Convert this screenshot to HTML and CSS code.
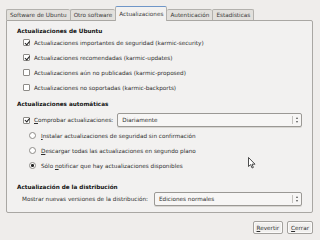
FILE: index.html
```html
<!DOCTYPE html>
<html lang="es">
<head>
  <meta charset="UTF-8" />
  <title>Orígenes del software</title>
  <link rel="stylesheet" href="styles.css">
</head>
<body>
  <div class="window">
    <div class="tabs">
      <div class="tab">Software de Ubuntu</div>
      <div class="tab">Otro software</div>
      <div class="tab active">Actualizaciones</div>
      <div class="tab">Autenticación</div>
      <div class="tab">Estadísticas</div>
    </div>

    <div class="panel">
      <h3>Actualizaciones de Ubuntu</h3>
      <div class="row check-row"><span class="check on"></span><span>Actualizaciones importantes de seguridad (karmic-security)</span></div>
      <div class="row check-row"><span class="check on"></span><span>Actualizaciones recomendadas (karmic-updates)</span></div>
      <div class="row check-row"><span class="check"></span><span>Actualizaciones aún no publicadas (karmic-proposed)</span></div>
      <div class="row check-row"><span class="check"></span><span>Actualizaciones no soportadas (karmic-backports)</span></div>

      <h3 class="gap">Actualizaciones automáticas</h3>
      <div class="combo-row check-row">
        <span class="check on"></span>
        <span class="label"><u>C</u>omprobar actualizaciones:</span>
        <div class="combo"><span class="value">Diariamente</span><span class="arrows"></span></div>
      </div>
      <div class="row radio-row"><span class="radio"></span><span><u>I</u>nstalar actualizaciones de seguridad sin confirmación</span></div>
      <div class="row radio-row"><span class="radio"></span><span><u>D</u>escargar todas las actualizaciones en segundo plano</span></div>
      <div class="row radio-row"><span class="radio on"></span><span>Sólo <u>n</u>otificar que hay actualizaciones disponibles</span></div>

      <h3 class="gap-big">Actualización de la distribución</h3>
      <div class="combo-row dist-row">
        <span class="label">Mostrar nuevas versiones de la distribución:</span>
        <div class="combo"><span class="value">Ediciones normales</span><span class="arrows"></span></div>
      </div>
    </div>

    <div class="actions">
      <button class="btn"><u>R</u>evertir</button>
      <button class="btn"><u>C</u>errar</button>
    </div>
  </div>

  <svg class="cursor" width="8" height="12" viewBox="0 0 8 12">
    <path d="M0.5 0.5 L0.5 9.5 L2.6 7.6 L4.1 11 L5.4 10.4 L4 7.2 L7 7.2 Z" fill="#fff" stroke="#222" stroke-width="0.8"/>
  </svg>
</body>
</html>
```

FILE: styles.css
```css
body {
  margin: 0;
  width: 320px;
  height: 240px;
  overflow: hidden;
  background-color: #efedeb;
  font-family: 'DejaVu Sans', sans-serif;
  font-size: 5.7px;
  color: #2e2e2e;
  position: relative;
}

.window {
  padding: 9px 7px 0 6px;
}

.tabs {
  display: flex;
  height: 11px;
  align-items: flex-end;
}

.tab {
  height: 10px;
  line-height: 10px;
  padding: 0 3px;
  background-color: #e2e0dc;
  border: 1px solid #b3b1ad;
  border-bottom: none;
  border-right: none;
  border-radius: 2px 2px 0 0;
  color: #3a3a3a;
  white-space: nowrap;
}

.tab:nth-child(5) {
  border-right: 1px solid #b3b1ad;
}

.tab.active {
  height: 14px;
  line-height: 14px;
  margin-bottom: -1px;
  position: relative;
  z-index: 1;
  background-color: #f2f1f0;
  border-top: 1px solid #6f96c8;
  border-right: 1px solid #b3b1ad;
}

.tab.active + .tab {
  border-left: none;
}

.panel {
  background-color: #f2f1f0;
  border: 1px solid #a9a7a3;
  border-radius: 0 2px 2px 2px;
  padding: 6px 10px 5px 10px;
}

h3 {
  margin: 0;
  height: 8px;
  line-height: 8px;
  font-size: 5.7px;
  font-weight: bold;
  color: #111;
}

h3.gap {
  margin-top: 5px;
  margin-bottom: 4px;
}

h3.gap-big {
  margin-top: 10px;
}

.row {
  display: flex;
  align-items: center;
  height: 15px;
  white-space: nowrap;
}

.check-row {
  padding-left: 6px;
}

.radio-row {
  padding-left: 12px;
}

.check {
  width: 5px;
  height: 5px;
  border: 1px solid #8d8b87;
  border-radius: 1px;
  background-color: #fff;
  margin-right: 4px;
  flex-shrink: 0;
  position: relative;
}

.check.on::after {
  content: "";
  position: absolute;
  left: 1.5px;
  top: -0.5px;
  width: 1.6px;
  height: 3.6px;
  border-right: 1.2px solid #222;
  border-bottom: 1.2px solid #222;
  transform: rotate(40deg);
}

.radio {
  width: 5px;
  height: 5px;
  border: 1px solid #8d8b87;
  border-radius: 50%;
  background-color: #fff;
  margin-right: 5px;
  flex-shrink: 0;
  position: relative;
}

.radio.on::after {
  content: "";
  position: absolute;
  left: 1.2px;
  top: 1.2px;
  width: 2.6px;
  height: 2.6px;
  border-radius: 50%;
  background-color: #222;
}

.combo-row {
  display: flex;
  align-items: center;
  height: 16px;
  white-space: nowrap;
}

.combo-row .label {
  margin-right: 4px;
}

.dist-row {
  padding-left: 5px;
}

.dist-row .label {
  margin-right: 6px;
}

.combo {
  flex: 1;
  height: 12px;
  display: flex;
  align-items: center;
  background-color: #f7f6f5;
  border: 1px solid #9b9995;
  border-radius: 2px;
  box-shadow: 0 1px 0 #d8d6d2;
}

.combo .value {
  flex: 1;
  padding-left: 4px;
}

.arrows {
  width: 8px;
  height: 8px;
  border-left: 1px solid #c4c2be;
  position: relative;
}

.arrows::before,
.arrows::after {
  content: "";
  position: absolute;
  left: 2.5px;
  border-left: 1.5px solid transparent;
  border-right: 1.5px solid transparent;
}

.arrows::before {
  top: 1px;
  border-bottom: 2px solid #555;
}

.arrows::after {
  top: 4.5px;
  border-top: 2px solid #555;
}

.actions {
  display: flex;
  justify-content: flex-end;
  gap: 4px;
  margin-top: 8px;
}

.btn {
  height: 13px;
  padding: 0 3px;
  font-family: 'DejaVu Sans', sans-serif;
  font-size: 5.7px;
  color: #2e2e2e;
  background-color: #f1f0ee;
  border: 1px solid #a3a19d;
  border-radius: 2px;
  box-shadow: inset 0 0 0 1px #fbfaf9;
}

u {
  text-decoration-thickness: 0.5px;
  text-underline-offset: 1px;
}

.cursor {
  position: absolute;
  left: 248px;
  top: 157px;
}
```
